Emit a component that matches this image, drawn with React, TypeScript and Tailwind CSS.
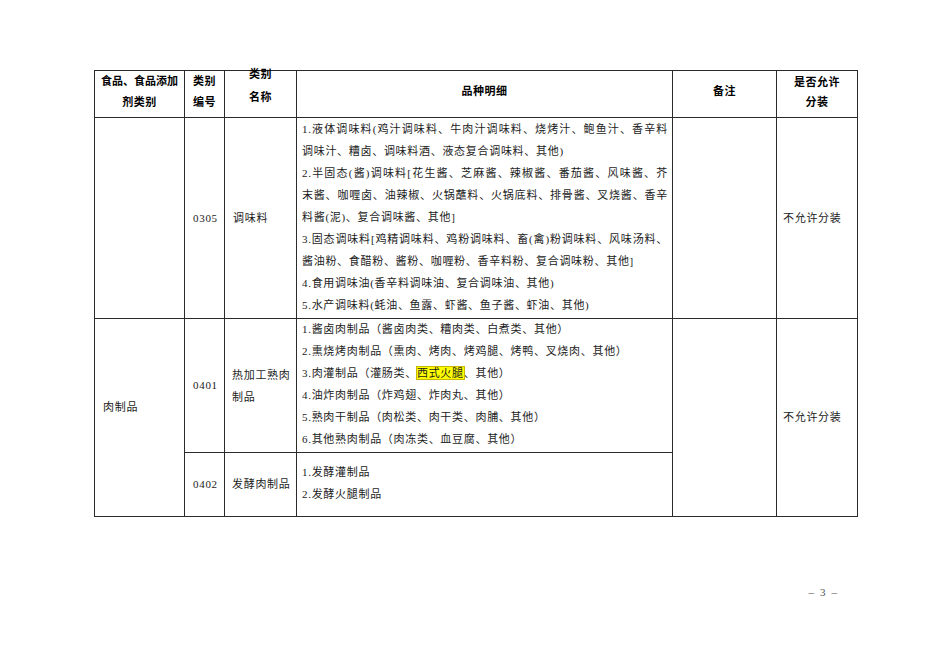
import React from 'react';

type Line = { text: React.ReactNode; justify?: boolean };

const body = "font-['Liberation_Serif','Noto_Sans_CJK_SC',serif] text-[11px] tracking-[0.7px] text-[#1c1c1c]";
const head = "font-['Liberation_Sans','Noto_Sans_CJK_SC',sans-serif] text-[11px] font-bold tracking-[0.5px] text-black";
const cell = 'border border-[#2b2b2b] p-0';

const seasoning: Line[] = [
  { text: '1.液体调味料(鸡汁调味料、牛肉汁调味料、烧烤汁、鲍鱼汁、香辛料', justify: true },
  { text: '调味汁、糟卤、调味料酒、液态复合调味料、其他)' },
  { text: '2.半固态(酱)调味料[花生酱、芝麻酱、辣椒酱、番茄酱、风味酱、芥', justify: true },
  { text: '末酱、咖喱卤、油辣椒、火锅蘸料、火锅底料、排骨酱、叉烧酱、香辛', justify: true },
  { text: '料酱(泥)、复合调味酱、其他]' },
  { text: '3.固态调味料[鸡精调味料、鸡粉调味料、畜(禽)粉调味料、风味汤料、', justify: true },
  { text: '酱油粉、食醋粉、酱粉、咖喱粉、香辛料粉、复合调味粉、其他]' },
  { text: '4.食用调味油(香辛料调味油、复合调味油、其他)' },
  { text: '5.水产调味料(蚝油、鱼露、虾酱、鱼子酱、虾油、其他)' },
];

const cookedMeat: Line[] = [
  { text: '1.酱卤肉制品（酱卤肉类、糟肉类、白煮类、其他）' },
  { text: '2.熏烧烤肉制品（熏肉、烤肉、烤鸡腿、烤鸭、叉烧肉、其他）' },
  {
    text: (
      <>
        3.肉灌制品（灌肠类、
        <span className="bg-[#ffff00] outline outline-1 outline-[#c9b800]">西式火腿</span>
        、其他）
      </>
    ),
  },
  { text: '4.油炸肉制品（炸鸡翅、炸肉丸、其他）' },
  { text: '5.熟肉干制品（肉松类、肉干类、肉脯、其他）' },
  { text: '6.其他熟肉制品（肉冻类、血豆腐、其他）' },
];

const fermentedMeat: Line[] = [{ text: '1.发酵灌制品' }, { text: '2.发酵火腿制品' }];

function LineList({ lines, lift }: { lines: Line[]; lift?: boolean }) {
  return (
    <div className={`${body} leading-[22px] pl-[5px] pr-[4px] ${lift ? '-mt-[3px]' : ''}`}>
      {lines.map((line, i) => (
        <div
          key={i}
          className={
            line.justify
              ? 'whitespace-nowrap text-justify [text-align-last:justify]'
              : 'whitespace-nowrap'
          }
        >
          {line.text}
        </div>
      ))}
    </div>
  );
}

export default function App() {
  return (
    <div className="w-[950px] h-[672px] bg-white pt-[70px] pl-[94px]">
      <table className="table-fixed border-collapse w-[763px]">
        <colgroup>
          <col className="w-[90px]" />
          <col className="w-[40px]" />
          <col className="w-[72px]" />
          <col className="w-[376px]" />
          <col className="w-[104px]" />
          <col className="w-[81px]" />
        </colgroup>
        <thead>
          <tr className="h-[47px]">
            <th className={`${cell} ${head} leading-[21px] pb-[4px] text-center align-middle`}>
              <div className="tracking-[0px]">食品、食品添加</div>
              <div>剂类别</div>
            </th>
            <th className={`${cell} ${head} leading-[21px] pb-[4px] text-center align-middle`}>
              <div>类别</div>
              <div>编号</div>
            </th>
            <th className={`${cell} ${head} leading-[23px] text-center align-top`}>
              <div className="-mt-[8px]">
                <div>类别</div>
                <div>名称</div>
              </div>
            </th>
            <th className={`${cell} ${head} pb-[6px] text-center align-middle`}>品种明细</th>
            <th className={`${cell} ${head} pb-[6px] text-center align-middle`}>备注</th>
            <th className={`${cell} ${head} leading-[20px] pb-[4px] text-center align-middle`}>
              <div>是否允许</div>
              <div>分装</div>
            </th>
          </tr>
        </thead>
        <tbody>
          <tr className="h-[201px]">
            <td className={cell}></td>
            <td className={`${cell} ${body} pl-[8px] align-middle`}>0305</td>
            <td className={`${cell} ${body} pl-[8px] align-middle`}>调味料</td>
            <td className={`${cell} align-middle`}>
              <LineList lines={seasoning} lift />
            </td>
            <td className={cell}></td>
            <td className={`${cell} ${body} pl-[6px] align-middle`}>不允许分装</td>
          </tr>
          <tr className="h-[134px]">
            <td rowSpan={2} className={`${cell} ${body} pl-[8px] pb-[20px] align-middle`}>
              肉制品
            </td>
            <td className={`${cell} ${body} pl-[8px] align-middle`}>0401</td>
            <td className={`${cell} ${body} leading-[22px] pl-[7px] align-middle`}>
              <div>热加工熟肉</div>
              <div>制品</div>
            </td>
            <td className={`${cell} align-middle`}>
              <LineList lines={cookedMeat} lift />
            </td>
            <td rowSpan={2} className={cell}></td>
            <td rowSpan={2} className={`${cell} ${body} pl-[6px] align-middle`}>
              不允许分装
            </td>
          </tr>
          <tr className="h-[64px]">
            <td className={`${cell} ${body} pl-[8px] align-middle`}>0402</td>
            <td className={`${cell} ${body} pl-[7px] align-middle`}>发酵肉制品</td>
            <td className={`${cell} align-middle pb-[4px]`}>
              <LineList lines={fermentedMeat} />
            </td>
          </tr>
        </tbody>
      </table>
      <div className="w-[763px] mt-[67px] pr-[20px] flex justify-end gap-[6px] font-['Liberation_Serif',serif] text-[11px] text-[#555]">
        <span>–</span>
        <span>3</span>
        <span>–</span>
      </div>
    </div>
  );
}
